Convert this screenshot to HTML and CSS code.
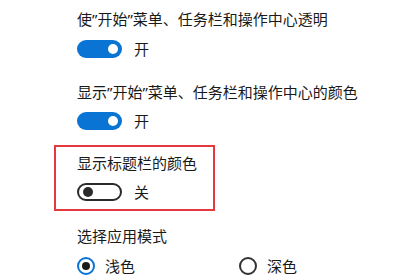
FILE: index.html
```html
<!DOCTYPE html>
<html lang="zh-CN">
<head>
<meta charset="utf-8">
<link rel="stylesheet" href="styles.css">
</head>
<body>
<div class="page">
  <div class="label first">使”开始”菜单、任务栏和操作中心透明</div>
  <div class="toggle-row"><span class="toggle on"><span class="knob"></span></span><span class="state">开</span></div>
  <div class="label second">显示”开始”菜单、任务栏和操作中心的颜色</div>
  <div class="toggle-row"><span class="toggle on"><span class="knob"></span></span><span class="state">开</span></div>
  <div class="highlight">
    <div class="label">显示标题栏的颜色</div>
    <div class="toggle-row"><span class="toggle off"><span class="knob"></span></span><span class="state">关</span></div>
  </div>
  <div class="label mode">选择应用模式</div>
  <div class="radios">
    <div class="radio-opt light"><span class="radio checked"><span class="dot"></span></span><span class="rlabel">浅色</span></div>
    <div class="radio-opt"><span class="radio"></span><span class="rlabel">深色</span></div>
  </div>
</div>
</body>
</html>
```
FILE: styles.css
```css
html, body {
  margin: 0;
  padding: 0;
  background: #ffffff;
}
body {
  width: 420px;
  height: 280px;
  overflow: hidden;
  font-family: "Noto Sans", "Noto Sans CJK SC", sans-serif;
  color: #1a1a1a;
  font-size: 15px;
}
.page {
  display: flex;
  flex-direction: column;
  align-items: flex-start;
  padding-left: 77px;
}
.label {
  height: 20px;
  line-height: 20px;
  white-space: nowrap;
}
.label.first { margin-top: 9px; }
.label.second { margin-top: 23px; }
.label.mode { margin-top: 15px; }
.toggle-row {
  display: flex;
  align-items: center;
  height: 20px;
  margin-top: 10px;
}
.second + .toggle-row { margin-top: 9px; }
.toggle {
  box-sizing: border-box;
  width: 45px;
  height: 18px;
  border-radius: 9px;
  display: flex;
  align-items: center;
}
.toggle.on {
  background: #0a74d4;
  justify-content: flex-end;
  padding-right: 4px;
}
.toggle.on .knob {
  width: 10px;
  height: 10px;
  border-radius: 50%;
  background: #ffffff;
}
.toggle.off {
  border: 2px solid #2b2b2b;
  padding-left: 4px;
}
.toggle.off .knob {
  width: 10px;
  height: 10px;
  border-radius: 50%;
  background: #2b2b2b;
}
.state {
  margin-left: 12px;
  line-height: 20px;
}
.highlight {
  margin-top: 14px;
  margin-left: -23px;
  width: 161px;
  height: 66px;
  box-sizing: border-box;
  border: 2px solid #e8383f;
  padding: 6px 0 0 21px;
}
.highlight .toggle-row { margin-top: 9px; }
.radios {
  display: flex;
  align-items: center;
  height: 20px;
  margin-top: 10px;
}
.radio-opt {
  display: flex;
  align-items: center;
}
.radio-opt.light { width: 162px; }
.radio {
  box-sizing: border-box;
  width: 18px;
  height: 18px;
  border-radius: 50%;
  border: 2px solid #333333;
  display: flex;
  align-items: center;
  justify-content: center;
}
.radio.checked { border-color: #0a74d4; }
.radio .dot {
  width: 8px;
  height: 8px;
  border-radius: 50%;
  background: #1a1a1a;
}
.rlabel {
  margin-left: 10px;
  line-height: 20px;
}
```
